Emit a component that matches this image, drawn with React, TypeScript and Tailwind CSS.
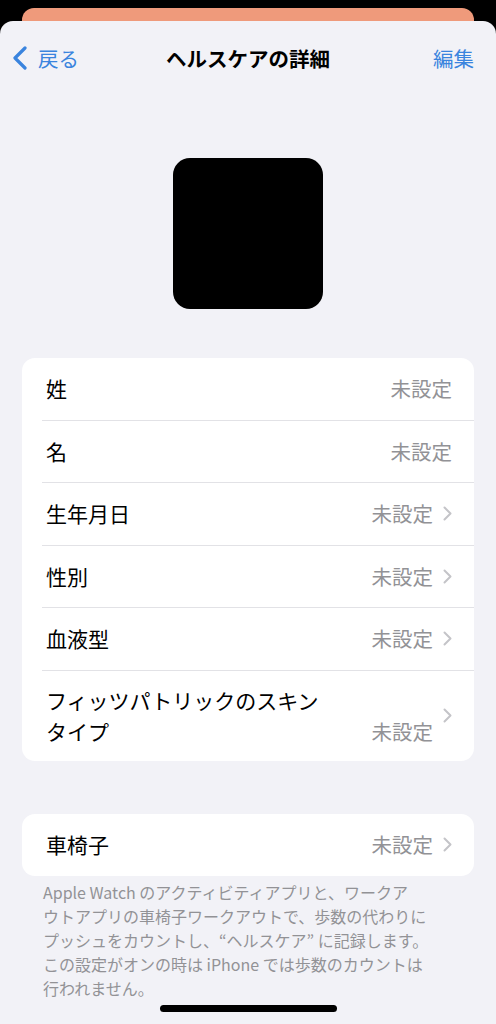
import React from "react";

type Row = {
  label: string[];
  value: string;
  chevron: boolean;
};

const profileRows: Row[] = [
  { label: ["姓"], value: "未設定", chevron: false },
  { label: ["名"], value: "未設定", chevron: false },
  { label: ["生年月日"], value: "未設定", chevron: true },
  { label: ["性別"], value: "未設定", chevron: true },
  { label: ["血液型"], value: "未設定", chevron: true },
  { label: ["フィッツパトリックのスキン", "タイプ"], value: "未設定", chevron: true },
];

const footerLines = [
  "Apple Watch のアクティビティアプリと、ワークア",
  "ウトアプリの車椅子ワークアウトで、歩数の代わりに",
  "プッシュをカウントし、“ヘルスケア” に記録します。",
  "この設定がオンの時は iPhone では歩数のカウントは",
  "行われません。",
];

const font = { fontFamily: '"Noto Sans CJK JP", "Noto Sans", sans-serif' };

function Chevron() {
  return (
    <svg width="9" height="15" viewBox="0 0 9 15" fill="none" className="shrink-0">
      <path d="M1.5 1.5L7.5 7.5L1.5 13.5" stroke="#c4c4c8" strokeWidth="2" strokeLinecap="round" strokeLinejoin="round" />
    </svg>
  );
}

function SettingRow({ row, last }: { row: Row; last: boolean }) {
  const multi = row.label.length > 1;
  return (
    <div className="pl-[20px]">
      <div
        className={`flex pr-[22px] ${multi ? "h-[90px] items-center" : "h-[62.5px] items-center"} ${
          last ? "" : "border-b border-[#e2e2e6]"
        }`}
      >
        <div className="flex-1 pl-[4px] text-[21px] leading-[31px] text-black">
          {row.label.map((line) => (
            <div key={line}>{line}</div>
          ))}
        </div>
        <div className={`flex gap-[10px] ${multi ? "items-center self-stretch" : "items-center"}`}>
          <span className={`text-[20.5px] text-[#929296] ${multi ? "self-end pb-[14px]" : ""}`}>{row.value}</span>
          {row.chevron && <Chevron />}
        </div>
      </div>
    </div>
  );
}

export default function App() {
  return (
    <div className="min-h-screen bg-black" style={font}>
      <div className="px-[22px] pt-[8px]">
        <div className="h-[14px] rounded-t-[12px] bg-[#ef9a7b]" />
      </div>
      <div className="-mt-px min-h-[1003px] rounded-t-[13px] bg-[#f2f2f7]">
        <header className="grid h-[74px] grid-cols-[1fr_auto_1fr] items-center px-[12px]">
          <div className="flex items-center gap-[10px] text-[#3a84de]">
            <svg width="16" height="24" viewBox="0 0 16 24" fill="none">
              <path d="M13 2L3 12L13 22" stroke="#3a84de" strokeWidth="3.2" strokeLinecap="round" strokeLinejoin="round" />
            </svg>
            <span className="text-[20.5px]">戻る</span>
          </div>
          <h1 className="text-[20.5px] font-bold text-black">ヘルスケアの詳細</h1>
          <span className="justify-self-end pr-[10px] text-[20.5px] text-[#3a84de]">編集</span>
        </header>

        <div className="mx-auto mt-[63px] h-[151px] w-[150px] rounded-[17px] bg-black" />

        <section className="mx-[22px] mt-[49px] overflow-hidden rounded-[13px] bg-white">
          {profileRows.map((row, i) => (
            <SettingRow key={row.label.join("")} row={row} last={i === profileRows.length - 1} />
          ))}
        </section>

        <section className="mx-[22px] mt-[53px] overflow-hidden rounded-[13px] bg-white">
          <SettingRow row={{ label: ["車椅子"], value: "未設定", chevron: true }} last />
        </section>

        <p className="mt-[4px] pl-[43px] text-[16px] leading-[24px] text-[#929296]">
          {footerLines.map((line) => (
            <span key={line} className="block whitespace-nowrap">
              {line}
            </span>
          ))}
        </p>

        <div className="mx-auto mt-[5px] h-[7px] w-[177px] rounded-full bg-black" />
      </div>
    </div>
  );
}
